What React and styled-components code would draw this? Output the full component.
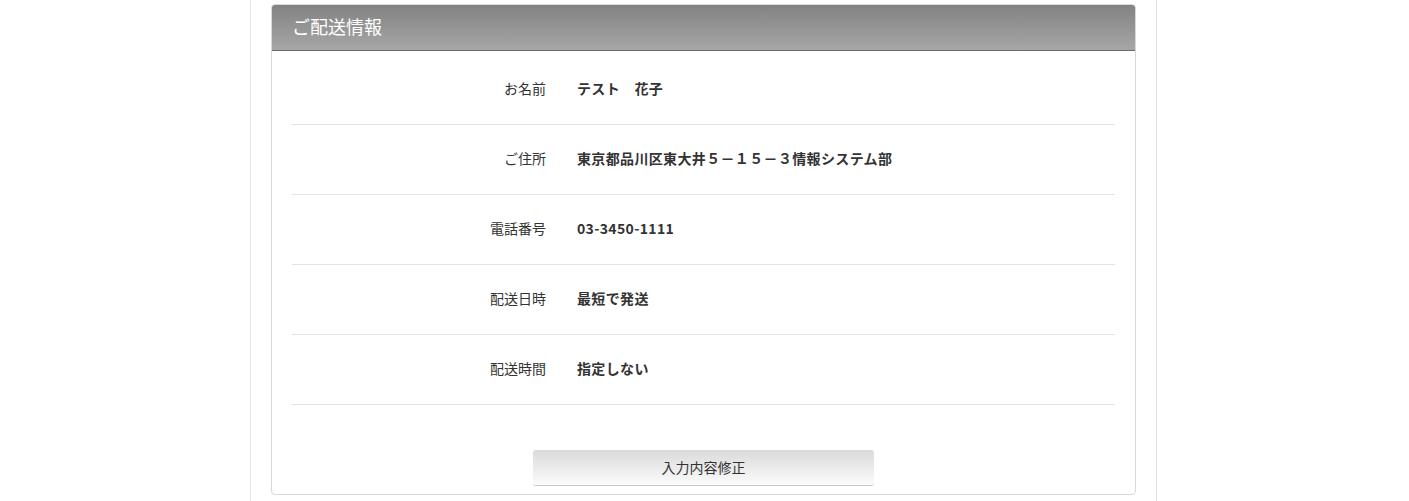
import React from "react";
import styled, { createGlobalStyle } from "styled-components";

const Global = createGlobalStyle`
  html, body { margin: 0; padding: 0; background: #fff; }
  body { font-family: "Noto Sans CJK JP", "Noto Sans", sans-serif; color: #333; }
`;

const Wrapper = styled.div`
  width: 907px;
  box-sizing: border-box;
  margin-left: calc((100% - 909px) / 2);
  min-height: 501px;
  border-left: 1px solid #e3e3e3;
  border-right: 1px solid #e3e3e3;
  padding: 4px 20px 0;
`;

const Card = styled.section`
  border: 1px solid #d8d8d8;
  border-radius: 4px;
  overflow: hidden;
  background: #fff;
`;

const Header = styled.h2`
  margin: 0;
  height: 46px;
  box-sizing: border-box;
  display: flex;
  align-items: center;
  padding: 0 20px 3px;
  background: linear-gradient(to bottom, #828282, #a7a7a7);
  border-bottom: 1px solid #6a6a6a;
  color: #fff;
  font-size: 18px;
  font-weight: normal;
`;

const Body = styled.div`
  padding: 4px 20px 8px;
`;

const Row = styled.div`
  display: flex;
  align-items: center;
  height: 70px;
  box-sizing: border-box;
  padding-bottom: 4px;
  border-bottom: 1px solid #e4e4e4;
  font-size: 14px;
`;

const Label = styled.div`
  width: 254px;
  text-align: right;
  color: #333;
`;

const Value = styled.div`
  padding-left: 31px;
  font-weight: bold;
  color: #333;
  letter-spacing: 0.35px;
`;

const Actions = styled.div`
  display: flex;
  justify-content: center;
  padding-top: 45px;
`;

const Button = styled.button`
  width: 341px;
  height: 36px;
  border: none;
  border-bottom: 1px solid #c8c8c8;
  border-radius: 3px;
  background: linear-gradient(to bottom, #dadada, #fbfbfb);
  font-family: inherit;
  font-size: 14px;
  color: #333;
  cursor: pointer;
  padding: 0 0 1px;
`;

const rows = [
  ["お名前", "テスト　花子"],
  ["ご住所", "東京都品川区東大井５－１５－３情報システム部"],
  ["電話番号", "03-3450-1111"],
  ["配送日時", "最短で発送"],
  ["配送時間", "指定しない"],
];

export default function App() {
  return (
    <>
      <Global />
      <Wrapper>
        <Card>
          <Header>ご配送情報</Header>
          <Body>
            {rows.map(([l, v]) => (
              <Row key={l}>
                <Label>{l}</Label>
                <Value>{v}</Value>
              </Row>
            ))}
            <Actions>
              <Button>入力内容修正</Button>
            </Actions>
          </Body>
        </Card>
      </Wrapper>
    </>
  );
}
